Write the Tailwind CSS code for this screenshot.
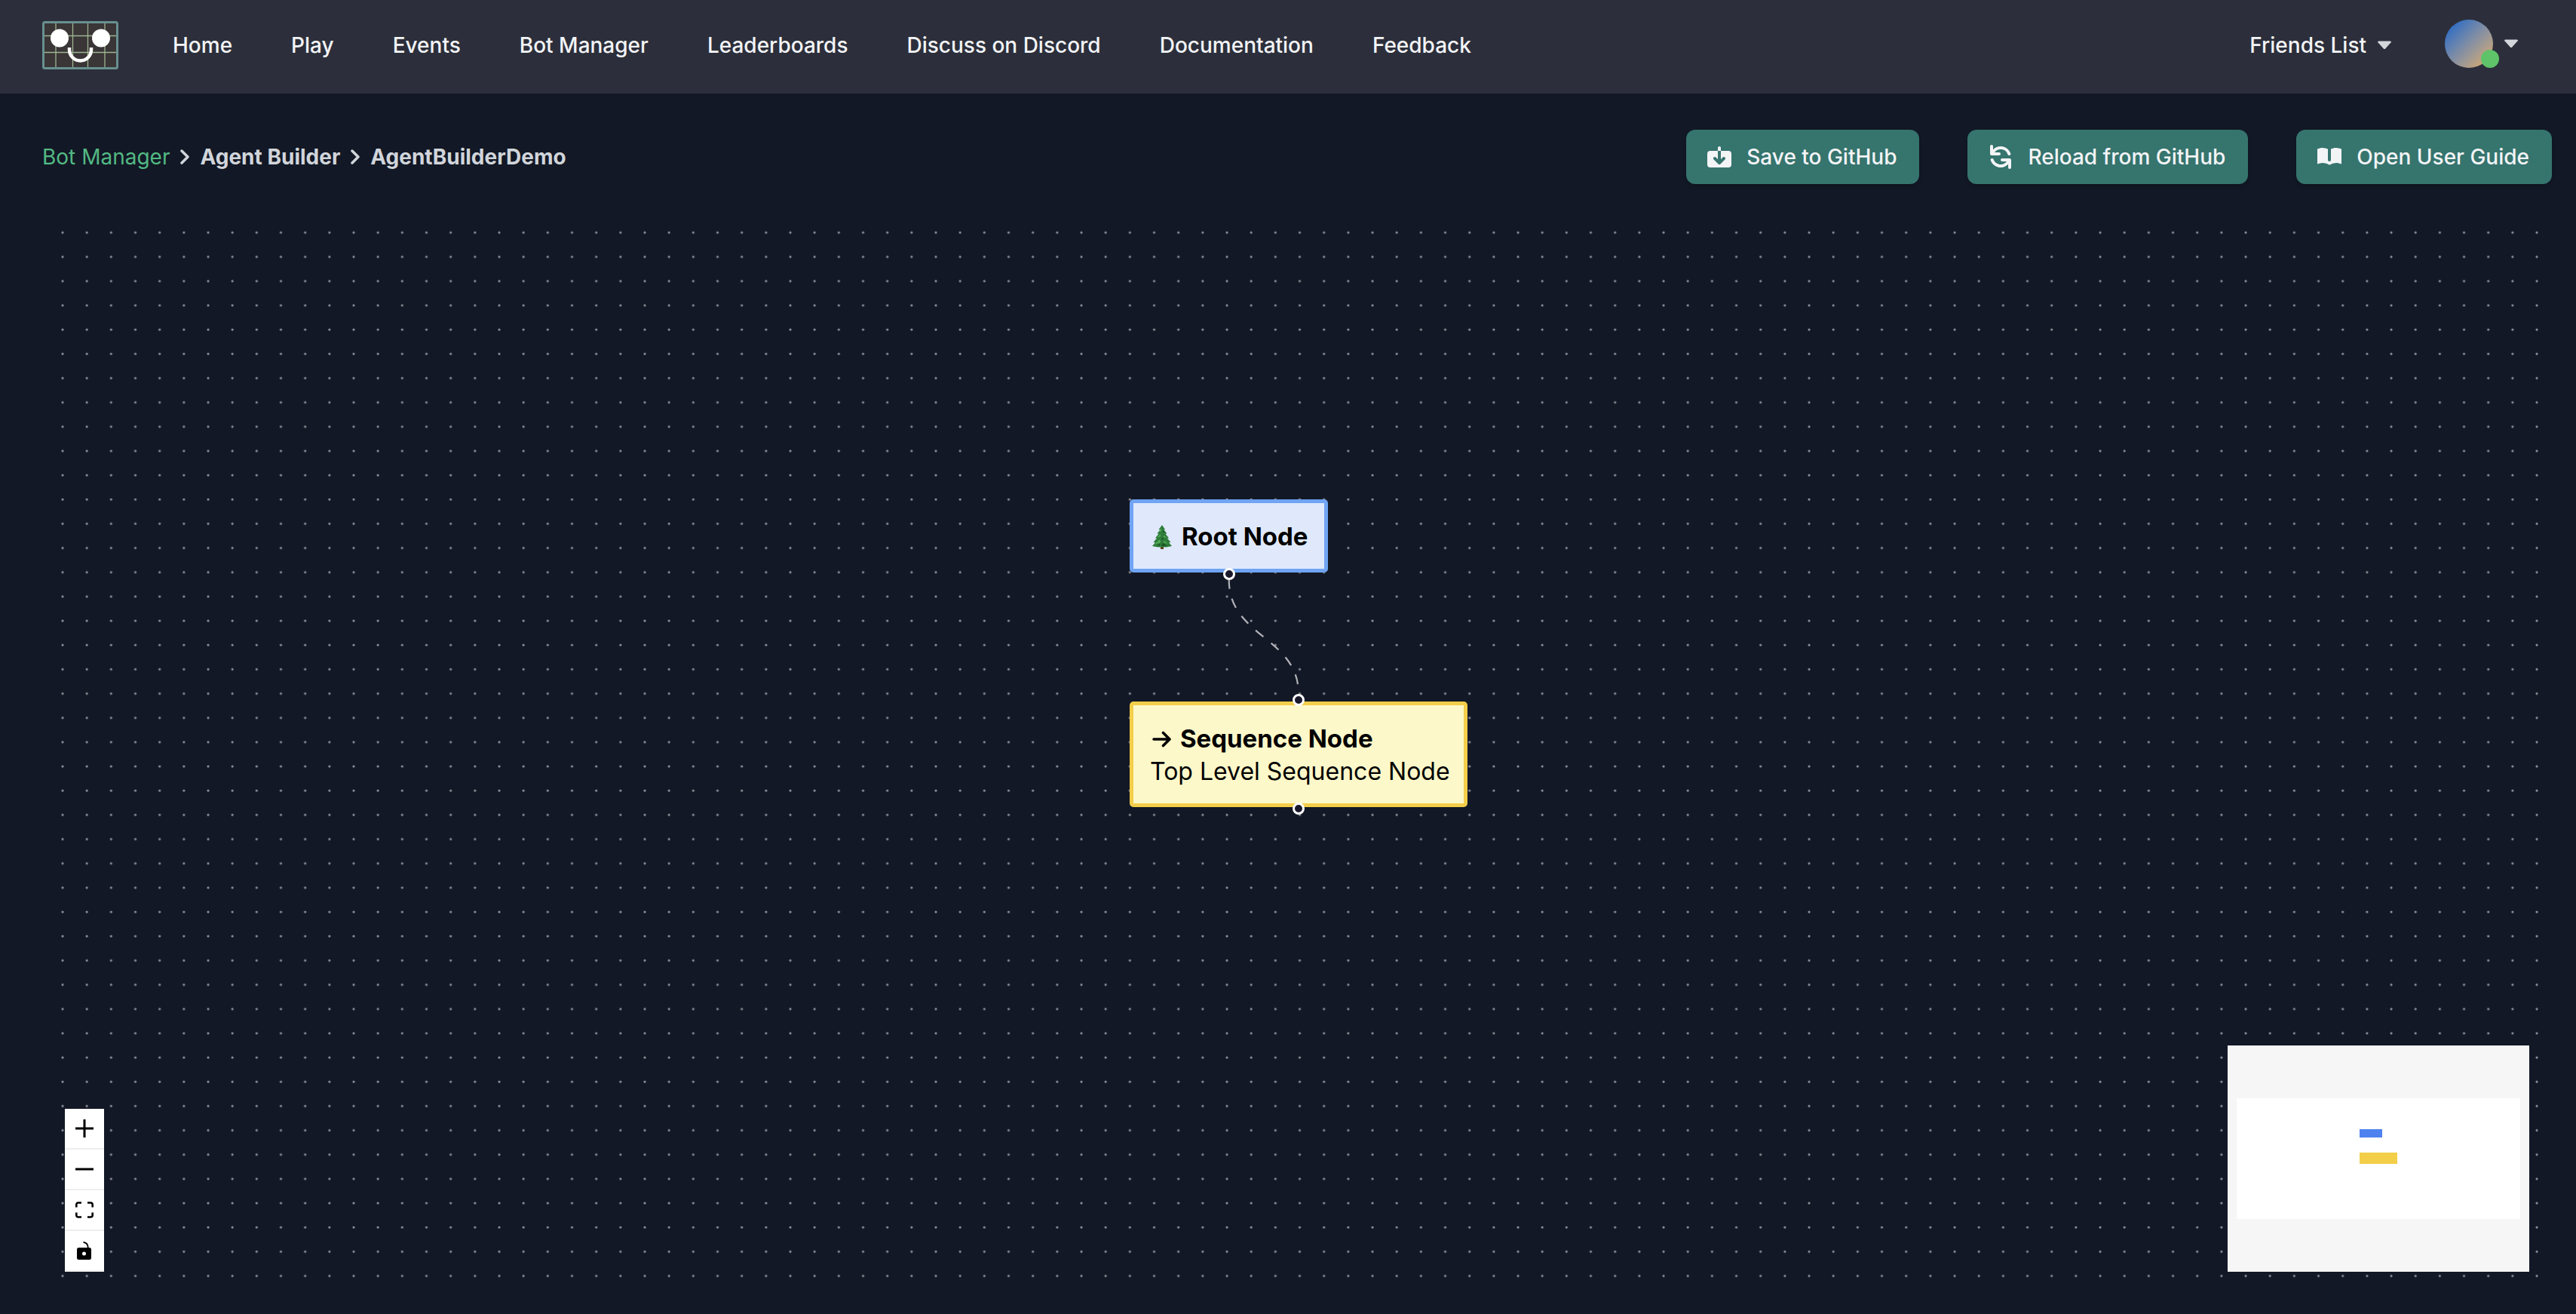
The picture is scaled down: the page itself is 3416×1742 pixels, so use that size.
<!DOCTYPE html>
<html lang="en">
<head>
<meta charset="utf-8">
<meta name="viewport" content="width=device-width, initial-scale=1">
<title>Agent Builder</title>
<script src="https://cdn.jsdelivr.net/npm/@tailwindcss/browser@4"></script>
</head>
<body class="flex min-h-screen flex-col bg-[#121825] font-['Inter',sans-serif] text-[28px] text-[#f3f4f6]">

<header class="flex h-[124px] items-center justify-between bg-[#2c2f3b] pb-1 pl-14 pr-[76px]">
  <div class="flex items-center gap-[72px]">
    <a href="#" aria-label="Home page" class="block">
      <svg class="h-16 w-[101px]" viewBox="0 0 101 64">
        <rect x="1.5" y="1.5" width="98" height="61" rx="2" fill="#3a3536" stroke="#68908f" stroke-width="3"/>
        <path d="M18 3v58M40.500 3v58M60.500 3v58M83 3v58M3 19.500h95M3 41.500h95" stroke="#9db592" stroke-width="1.300" fill="none"/>
        <circle cx="23" cy="22.500" r="12" fill="#fff"/>
        <circle cx="78" cy="22.500" r="12" fill="#fff"/>
        <path d="M36 35v3a14.500 14.500 0 0 0 29 0v-3" stroke="#fff" stroke-width="4.500" fill="none"/>
      </svg>
    </a>
    <nav class="flex items-center gap-[78px] font-medium">
      <a href="#">Home</a>
      <a href="#">Play</a>
      <a href="#">Events</a>
      <a href="#">Bot Manager</a>
      <a href="#">Leaderboards</a>
      <a href="#">Discuss on Discord</a>
      <a href="#">Documentation</a>
      <a href="#">Feedback</a>
    </nav>
  </div>
  <div class="flex items-center gap-[70px]">
    <button type="button" class="flex items-center gap-[14px] font-medium">
      Friends List
      <svg class="h-3 w-5" viewBox="0 0 20 12"><path d="M2 .5h16q1.500.5.6 1.800L11 10.700q-1 .8-2 0L1.400 2.300Q.5 1 2 .5z" fill="#d3d6da"/></svg>
    </button>
    <button type="button" aria-label="Account menu" class="flex items-center gap-[14px] pb-1">
      <span class="relative block size-16 rounded-full bg-linear-to-br from-[#356fc0] from-15% to-[#c8a679] to-85%">
        <span class="absolute -right-2 bottom-0 size-6 rounded-full bg-[#5fc369]"></span>
      </span>
      <svg class="h-3 w-5" viewBox="0 0 20 12"><path d="M2 .5h16q1.500.5.6 1.800L11 10.700q-1 .8-2 0L1.400 2.300Q.5 1 2 .5z" fill="#d3d6da"/></svg>
    </button>
  </div>
</header>

<main class="flex flex-1 flex-col pb-[26px] pl-14 pr-8 pt-12">
  <div class="flex items-center justify-between">
    <nav aria-label="Breadcrumb" class="flex items-center gap-[14px] font-bold text-[#d1d5db]">
      <a href="#" class="font-normal text-[#53b883]">Bot Manager</a>
      <svg class="h-5 w-3" viewBox="0 0 12 20" fill="none" stroke="#d1d5db" stroke-width="3.500" stroke-linecap="round" stroke-linejoin="round"><path d="M2 2l8 8-8 8"/></svg>
      <span>Agent Builder</span>
      <svg class="h-5 w-3" viewBox="0 0 12 20" fill="none" stroke="#d1d5db" stroke-width="3.500" stroke-linecap="round" stroke-linejoin="round"><path d="M2 2l8 8-8 8"/></svg>
      <span>AgentBuilderDemo</span>
    </nav>
    <div class="flex items-center gap-16 font-medium">
      <button type="button" class="flex h-[72px] items-center gap-4 rounded-xl bg-[#36746e] pl-6 pr-[30px] shadow-md">
        <svg class="size-10" viewBox="0 0 20 20" fill="#f3f4f6"><path d="M11 11.586l1.293-1.293a1 1 0 011.414 1.414l-3 3a1 1 0 01-1.414 0l-3-3a1 1 0 011.414-1.414L9 11.586V6H4a2 2 0 00-2 2v7a2 2 0 002 2h12a2 2 0 002-2V8a2 2 0 00-2-2h-5v5.586zM9 4a1 1 0 012 0v2H9V4z"/></svg>
        Save to GitHub
      </button>
      <button type="button" class="flex h-[72px] items-center gap-4 rounded-xl bg-[#36746e] pl-6 pr-[30px] shadow-md">
        <svg class="size-10" viewBox="0 0 20 20" fill="#f3f4f6"><path fill-rule="evenodd" d="M4 2a1 1 0 011 1v2.101a7.002 7.002 0 0111.601 2.566 1 1 0 11-1.885.666A5.002 5.002 0 005.999 7H9a1 1 0 010 2H4a1 1 0 01-1-1V3a1 1 0 011-1zm.008 9.057a1 1 0 011.276.61A5.002 5.002 0 0014.001 13H11a1 1 0 110-2h5a1 1 0 011 1v5a1 1 0 11-2 0v-2.101a7.002 7.002 0 01-11.601-2.566 1 1 0 01.61-1.276z"/></svg>
        Reload from GitHub
      </button>
      <button type="button" class="flex h-[72px] items-center gap-4 rounded-xl bg-[#36746e] pl-6 pr-[30px] shadow-md">
        <svg class="size-10" viewBox="0 0 20 20" fill="#f3f4f6"><path d="M9 4.804A7.968 7.968 0 005.500 4c-1.255 0-2.443.29-3.500.804v10A7.969 7.969 0 015.500 14c1.669 0 3.218.51 4.500 1.385A7.962 7.962 0 0114.500 14c1.255 0 2.443.29 3.500.804v-10A7.968 7.968 0 0014.500 4c-1.255 0-2.443.29-3.500.804V12a1 1 0 11-2 0V4.804z"/></svg>
        Open User Guide
      </button>
    </div>
  </div>

  <section aria-label="Behaviour tree canvas" class="relative mt-[52px] flex flex-1 items-end justify-between overflow-hidden p-[30px] text-[32px] leading-[43px] text-black">
    <svg class="absolute inset-0 size-full" aria-hidden="true">
      <defs>
        <pattern id="dots" x="25" y="10.300" width="32.167" height="32.167" patternUnits="userSpaceOnUse">
          <circle cx="2" cy="2" r="1.600" fill="#91919a"/>
        </pattern>
      </defs>
      <rect width="100%" height="100%" fill="url(#dots)"/>
      <path d="M1573.700 473C1573.700 548.500 1666 548.500 1666 624" fill="none" stroke="#b1b1b7" stroke-width="2.200" stroke-dasharray="13.300" stroke-dashoffset="1.600"/>
    </svg>

    <div class="absolute left-[1442px] top-[366px] w-[263px] rounded-[5px] border-5 border-[#70a4f3] bg-[#dfe9fb] px-[22px] pb-[21px] pt-[23px]">
      <div class="flex items-center gap-3 pl-0.5 text-[33px] font-bold">
        <svg class="h-8 w-7 shrink-0" viewBox="0 0 28 32">
          <path d="M12 26h4v6h-4z" fill="#6b3d1c"/>
          <path d="M14 0l4 6-1.500.3 4 5-2 .4 4.500 5.500-2 .5 4.500 5-2.500.6 4 4.700q-13 3-26 0l4-4.700-2.500-.6 4.500-5-2-.5 4.500-5.500-2-.4 4-5L9.500 6z" fill="#2f7d3a"/>
          <path d="M13 4l-3 5 3-1zM12 12l-5 5 5-2zM11 19l-7 7 8-3zM17 14l3 3-4-1zM17 21l5 4-6-2z" fill="#58b15a"/>
          <path d="M15 7l3 3-3-.5zM14 17l3 2-4 .5zM15 24l6 4-8-.5zM8 26l4-1-2 3z" fill="#1c5227"/>
        </svg>
        <span class="whitespace-nowrap">Root Node</span>
      </div>
      <span class="absolute -bottom-[15px] left-1/2 size-4 -translate-x-1/2 rounded-full border-[3px] border-white bg-[#1a192b]"></span>
    </div>

    <div class="absolute left-[1442px] top-[634px] w-[448px] whitespace-nowrap rounded-[5px] border-5 border-[#f3ce49] bg-[#fdf8c9] px-[22px] pb-[21px] pt-[23px]">
      <div class="flex items-center gap-3 pl-0.5 text-[33px] font-bold">
        <svg class="h-6 w-[26px] shrink-0" viewBox="0 0 26 24" fill="none" stroke="#000" stroke-width="3.600" stroke-linecap="round" stroke-linejoin="round"><path d="M3 12h21M15.500 3.500l8.500 8.500-8.500 8.500"/></svg>
        <span>Sequence Node</span>
      </div>
      <div>Top Level Sequence Node</div>
      <span class="absolute -top-[15px] left-1/2 size-4 -translate-x-1/2 rounded-full border-[3px] border-white bg-[#1a192b]"></span>
      <span class="absolute -bottom-[15px] left-1/2 size-4 -translate-x-1/2 rounded-full border-[3px] border-white bg-[#1a192b]"></span>
    </div>

    <div class="relative flex w-[52px] flex-col bg-white">
      <button type="button" aria-label="Zoom in" class="flex h-[54px] items-center justify-center border-b-2 border-[#eee]">
        <svg class="size-6" viewBox="0 0 24 24" stroke="#000" stroke-width="3"><path d="M12 0v24M0 12h24"/></svg>
      </button>
      <button type="button" aria-label="Zoom out" class="flex h-[54px] items-center justify-center border-b-2 border-[#eee]">
        <svg class="size-6" viewBox="0 0 24 24" stroke="#000" stroke-width="3"><path d="M0 12h24"/></svg>
      </button>
      <button type="button" aria-label="Fit view" class="flex h-[54px] items-center justify-center border-b-2 border-[#eee]">
        <svg class="size-6" viewBox="0 0 24 24" fill="none" stroke="#000" stroke-width="2.600"><path d="M1.300 8.500V5q0-2.500 2.500-2.500H8M16 2.500h4q2.700 0 2.700 2.500v3.500M22.700 15.500V19q0 2.500-2.700 2.500h-4M8 21.500H3.800Q1.300 21.500 1.300 19v-3.500"/></svg>
      </button>
      <button type="button" aria-label="Toggle interactivity" class="flex h-[54px] items-center justify-center border-b-2 border-[#eee]">
        <svg class="size-6" viewBox="0 0 24 24"><path d="M10.500.8Q17 1.500 16.700 9" fill="none" stroke="#000" stroke-width="1.800"/><path fill-rule="evenodd" d="M4.500 8h14q2.500 0 2.500 2.500v11q0 2.500-2.500 2.500h-14Q2 24 2 21.500v-11Q2 8 4.500 8zm7 5.500a2.500 2.500 0 1 0 0 5 2.500 2.500 0 0 0 0-5z"/></svg>
      </button>
    </div>

    <svg class="relative h-[300px] w-[400px] bg-white" viewBox="0 0 400 300" role="img" aria-label="Mini map">
      <path fill="#f6f6f6" fill-rule="evenodd" d="M0 0h400v300H0zM12.300 70v160h375.400V70z"/>
      <rect x="175" y="111" width="30" height="11" fill="#4e82ee"/>
      <rect x="175" y="142" width="50" height="15" fill="#f3ce49"/>
    </svg>
  </section>
</main>
</body>
</html>
